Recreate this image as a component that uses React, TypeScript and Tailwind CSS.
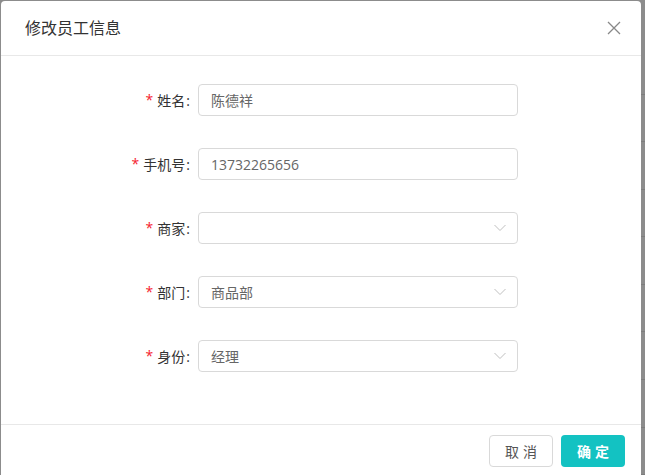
interface Field {
  label: string;
  value: string;
  select?: boolean;
}

const fields: Field[] = [
  { label: '姓名', value: '陈德祥' },
  { label: '手机号', value: '13732265656' },
  { label: '商家', value: '', select: true },
  { label: '部门', value: '商品部', select: true },
  { label: '身份', value: '经理', select: true },
];

function FormRow({ field }: { field: Field }) {
  return (
    <div className="flex items-center h-8 mb-8">
      <label className="w-[197px] shrink-0 flex justify-end items-center pr-[8px] text-[14px] text-[#333]">
        <span className="text-[#f5222d] mr-[4px] text-[14px] leading-none">*</span>
        {field.label}
        <span className="ml-[1px]">:</span>
      </label>
      <div className="w-[320px] h-8 border border-[#d9d9d9] rounded-[4px] flex items-center pl-3 pr-[11px] text-[14px] text-[#666] bg-white">
        <span className="flex-1">{field.value}</span>
        {field.select && (
          <svg width="12" height="8" viewBox="0 0 12 8" className="text-[#bfbfbf]">
            <path d="M0.5 1L6 6.5L11.5 1" stroke="currentColor" strokeWidth="1" fill="none" />
          </svg>
        )}
      </div>
    </div>
  );
}

export default function App() {
  return (
    <div
      className="w-[645px] h-[475px] bg-[#8c8c8c] flex pt-px pl-px overflow-hidden"
      style={{ fontFamily: '"Open Sans", "Noto Sans CJK SC", sans-serif' }}
    >
      {/* Modal */}
      <div className="w-[640px] h-[500px] bg-white rounded-t-[4px] flex flex-col shrink-0">
        <div className="h-[55px] border-b border-[#e8e8e8] flex items-center justify-between pl-6 pr-5">
          <h2 className="text-[16px] text-[#333]">修改员工信息</h2>
          <svg width="14" height="14" viewBox="0 0 14 14" className="text-[#888]">
            <path d="M1 1L13 13M13 1L1 13" stroke="currentColor" strokeWidth="1.3" fill="none" />
          </svg>
        </div>
        <div className="pt-7 h-[368px]">
          {fields.map(f => (
            <FormRow key={f.label} field={f} />
          ))}
        </div>
        <div className="border-t border-[#e8e8e8] flex justify-end gap-2 pt-[10px] pr-4">
          <button className="w-16 h-8 border border-[#d9d9d9] rounded-[4px] text-[14px] text-[#555] tracking-[0.3em] pl-[0.3em] bg-white">
            取消
          </button>
          <button className="w-16 h-8 rounded-[4px] text-[14px] text-white bg-[#13c2c2] font-bold tracking-[0.3em] pl-[0.3em]">
            确定
          </button>
        </div>
      </div>
      {/* Background table edge */}
      <div className="flex-1 flex flex-col pt-[46px]">
        {Array.from({ length: 9 }).map((_, i) => (
          <div key={i} className="h-[52px] border-b border-[#7d7d7d]" />
        ))}
      </div>
    </div>
  );
}
